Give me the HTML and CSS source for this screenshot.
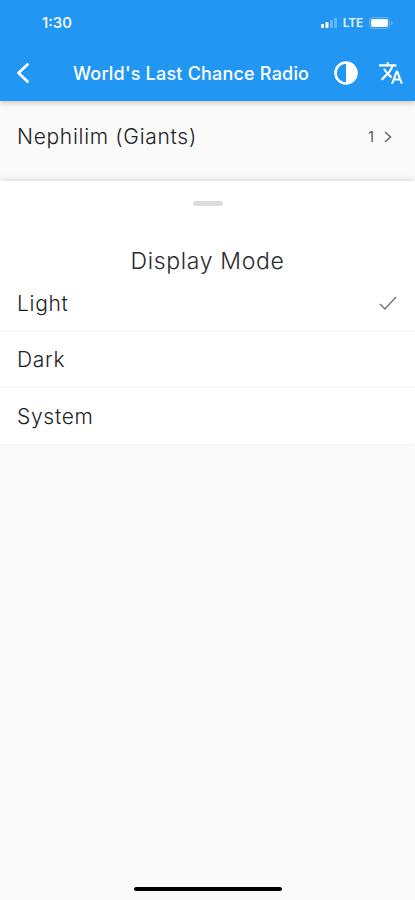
FILE: index.html
```html
<!DOCTYPE html>
<html lang="en">
<head>
  <meta charset="UTF-8" />
  <meta name="viewport" content="width=device-width, initial-scale=1.0"/>
  <title>Display Mode</title>
  <link rel="stylesheet" href="styles.css">
</head>
<body>
  <header class="appbar">
    <div class="statusbar">
      <span class="time">1:30</span>
      <div class="status-icons">
        <svg class="signal" width="16" height="10" viewBox="0 0 16 10">
          <rect x="0" y="6" width="3" height="4" rx="1" fill="#fff"/>
          <rect x="4.500" y="4" width="3" height="6" rx="1" fill="#fff"/>
          <rect x="9" y="2" width="3" height="8" rx="1" fill="#fff" opacity="0.3"/>
          <rect x="13" y="0" width="3" height="10" rx="1" fill="#fff" opacity="0.3"/>
        </svg>
        <span class="lte">LTE</span>
        <svg class="battery" width="24" height="12" viewBox="0 0 24 12">
          <rect x="0.500" y="0.500" width="20" height="11" rx="3.500" fill="none" stroke="#fff" stroke-opacity="0.3"/>
          <rect x="2" y="2" width="17" height="8" rx="2" fill="#fff"/>
          <path d="M22 4c1 .3 1.500 1 1.500 2s-.5 1.700-1.500 2z" fill="#fff" fill-opacity="0.35"/>
        </svg>
      </div>
    </div>
    <nav class="navbar">
      <svg class="back" width="16" height="22" viewBox="0 0 16 22">
        <path d="M12.500 2.500 3.500 11l9 8.500" fill="none" stroke="#fff" stroke-width="2.800" stroke-linecap="round" stroke-linejoin="round"/>
      </svg>
      <h1 class="title">World's Last Chance Radio</h1>
      <svg class="contrast" width="26" height="26" viewBox="0 0 26 26">
        <circle cx="13" cy="13" r="10.500" fill="none" stroke="#fff" stroke-width="2.600"/>
        <path d="M13 3a10 10 0 0 1 0 20z" fill="#fff"/>
      </svg>
      <svg class="translate" width="26" height="26" viewBox="0 0 24 24">
        <path fill="#fff" d="M12.870 15.070l-2.540-2.510.03-.03c1.740-1.940 2.980-4.170 3.710-6.530H17V4h-7V2H8v2H1v1.990h11.170C11.500 7.920 10.440 9.750 9 11.350 8.070 10.320 7.300 9.190 6.690 8h-2c.73 1.630 1.730 3.170 2.980 4.560l-5.090 5.020L4 19l5-5 3.110 3.110.76-2.040zM18.500 10h-2L12 22h2l1.120-3h4.750L21 22h2l-4.500-12zm-2.620 7l1.620-4.330L19.120 17h-3.240z"/>
      </svg>
    </nav>
  </header>

  <div class="list-row">
    <span class="list-label">Nephilim (Giants)</span>
    <span class="list-count">1</span>
    <svg class="chevron" width="10" height="14" viewBox="0 0 10 14">
      <path d="M2 2l5.500 5L2 12" fill="none" stroke="#666" stroke-width="1.500"/>
    </svg>
  </div>

  <section class="sheet">
    <div class="handle"></div>
    <h2 class="sheet-title">Display Mode</h2>
    <div class="option">
      <span>Light</span>
      <svg class="check" width="20" height="16" viewBox="0 0 20 16">
        <path d="M2 9l5 5L18 2" fill="none" stroke="#777" stroke-width="1.500"/>
      </svg>
    </div>
    <div class="option"><span>Dark</span></div>
    <div class="option"><span>System</span></div>
  </section>

  <div class="spacer"></div>
  <div class="home-indicator"></div>
</body>
</html>
```

FILE: styles.css
```css
html, body {
  height: 100%;
}

body {
  margin: 0;
  background: #fafafa;
  color: #222;
  font-family: 'Inter', 'Roboto', sans-serif;
  display: flex;
  flex-direction: column;
  height: 900px;
  overflow: hidden;
}

.appbar {
  background: #2196f3;
  height: 101px;
  box-sizing: border-box;
  flex-shrink: 0;
  box-shadow: 0 2px 5px rgba(0, 0, 0, 0.2);
  position: relative;
  color: white;
}

.statusbar {
  height: 45px;
  display: flex;
  align-items: center;
  justify-content: space-between;
  padding: 0 22px 0 42px;
}

.time {
  font-size: 15px;
  font-weight: 500;
}

.status-icons {
  display: flex;
  align-items: center;
  gap: 6px;
}

.lte {
  font-size: 12px;
  font-weight: 600;
  letter-spacing: -0.2px;
  opacity: 0.9;
}

.navbar {
  display: flex;
  align-items: center;
  height: 56px;
  padding: 0 11px 0 15px;
}

.title {
  margin: 0 0 0 42px;
  font-size: 18px;
  font-weight: 500;
  letter-spacing: 0.2px;
  white-space: nowrap;
  flex-grow: 1;
}

.translate {
  margin-left: 19px;
}

.list-row {
  height: 80px;
  flex-shrink: 0;
  display: flex;
  align-items: center;
  padding: 0 22px 9px 17px;
  box-sizing: border-box;
}

.list-label {
  font-size: 21px;
  font-weight: 300;
  letter-spacing: 0.7px;
  flex-grow: 1;
}

.list-count {
  font-size: 14px;
  color: #555;
  margin-right: 9px;
}

.sheet {
  background: white;
  flex-shrink: 0;
  box-shadow: 0 -2px 5px rgba(0, 0, 0, 0.1);
  position: relative;
}

.handle {
  width: 30px;
  height: 5px;
  border-radius: 3px;
  background: #dcdcdc;
  margin: 20px auto 0;
}

.sheet-title {
  margin: 0;
  padding-top: 40px;
  height: 70px;
  line-height: 30px;
  box-sizing: border-box;
  text-align: center;
  font-size: 23px;
  font-weight: 300;
  letter-spacing: 0.65px;
  color: #2b2b2b;
}

.option {
  height: 56px;
  display: flex;
  align-items: center;
  justify-content: space-between;
  box-sizing: border-box;
  padding: 0 17px;
  font-size: 21px;
  font-weight: 300;
  letter-spacing: 0.7px;
  border-bottom: 2px solid #f8f8f8;
}

.option:last-child {
  border-bottom: none;
}

.spacer {
  flex-grow: 1;
}

.home-indicator {
  width: 148px;
  height: 4px;
  border-radius: 2px;
  background: #000;
  margin: 0 auto 9px;
  flex-shrink: 0;
}
```
